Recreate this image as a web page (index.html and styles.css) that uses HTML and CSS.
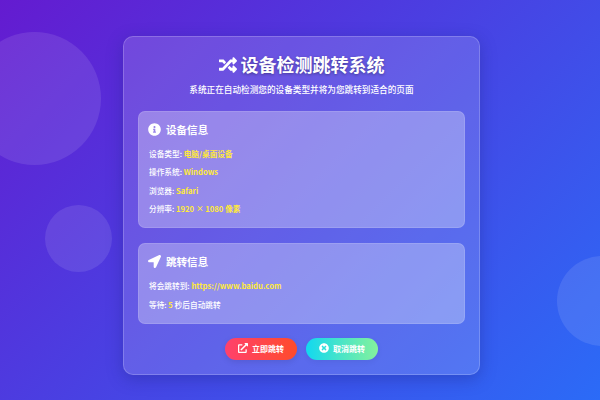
FILE: index.html
```html
<!DOCTYPE html>
<html lang="zh-CN">
<head>
<meta charset="utf-8">
<title>设备检测跳转系统</title>
<link rel="stylesheet" href="styles.css">
</head>
<body>
<div class="bubble bubble-a"></div>
<div class="bubble bubble-b"></div>
<div class="bubble bubble-c"></div>
<main class="card">
  <header class="head">
    <h1 class="title">
      <svg class="title-icon" viewBox="0 0 512 512"><path d="M504.971 359.029c9.373 9.373 9.373 24.569 0 33.941l-80 79.984c-15.01 15.01-40.971 4.49-40.971-16.971V416h-58.785a12.004 12.004 0 0 1-8.773-3.812l-70.556-75.596 53.333-57.143L352 336h32v-39.981c0-21.438 25.943-31.998 40.971-16.971l80 79.981zM12 176h84l52.781 56.551 53.333-57.143-70.556-75.596A11.999 11.999 0 0 0 122.785 96H12c-6.627 0-12 5.373-12 12v56c0 6.627 5.373 12 12 12zm372 0v39.984c0 21.46 25.961 31.98 40.971 16.971l80-79.984c9.373-9.373 9.373-24.569 0-33.941l-80-79.981C409.943 24.021 384 34.582 384 56.019V96h-58.785a12.004 12.004 0 0 0-8.773 3.812L96 336H12c-6.627 0-12 5.373-12 12v56c0 6.627 5.373 12 12 12h110.785c3.326 0 6.503-1.381 8.773-3.812L352 176h32z" fill="currentColor"/></svg>
      <span>设备检测跳转系统</span>
    </h1>
    <p class="subtitle">系统正在自动检测您的设备类型并将为您跳转到适合的页面</p>
  </header>
  <section class="panel">
    <h2 class="panel-title">
      <svg class="panel-icon" viewBox="0 0 512 512"><path d="M256 8C119.043 8 8 119.083 8 256c0 136.997 111.043 248 248 248s248-111.003 248-248C504 119.083 392.957 8 256 8zm0 110c23.196 0 42 18.804 42 42s-18.804 42-42 42-42-18.804-42-42 18.804-42 42-42zm56 254c0 6.627-5.373 12-12 12h-88c-6.627 0-12-5.373-12-12v-24c0-6.627 5.373-12 12-12h12v-64h-12c-6.627 0-12-5.373-12-12v-24c0-6.627 5.373-12 12-12h64c6.627 0 12 5.373 12 12v100h12c6.627 0 12 5.373 12 12v24z" fill="currentColor"/></svg>
      <span>设备信息</span>
    </h2>
    <p class="row">设备类型: <b class="val">电脑/桌面设备</b></p>
    <p class="row">操作系统: <b class="val">Windows</b></p>
    <p class="row">浏览器: <b class="val">Safari</b></p>
    <p class="row">分辨率: <b class="val">1920 × 1080 像素</b></p>
  </section>
  <section class="panel">
    <h2 class="panel-title">
      <svg class="panel-icon" viewBox="0 0 512 512"><path d="M444.52 3.52L28.74 195.42c-47.97 22.39-31.98 92.75 19.19 92.75h175.91v175.91c0 51.17 70.36 67.17 92.75 19.19l191.9-415.78c15.99-38.39-25.59-79.97-63.97-63.97z" fill="currentColor"/></svg>
      <span>跳转信息</span>
    </h2>
    <p class="row">将会跳转到: <b class="val">https://www.baidu.com</b></p>
    <p class="row">等待: <b class="val">5</b> 秒后自动跳转</p>
  </section>
  <div class="actions">
    <a class="btn btn-go">
      <svg class="btn-icon" viewBox="0 0 512 512"><path d="M432 320h-32a16 16 0 0 0-16 16v112H64V128h144a16 16 0 0 0 16-16V80a16 16 0 0 0-16-16H48a48 48 0 0 0-48 48v352a48 48 0 0 0 48 48h352a48 48 0 0 0 48-48V336a16 16 0 0 0-16-16zM488 0H360c-21.37 0-32.05 25.91-17 41l35.73 35.73L135 320.370a24 24 0 0 0 0 34L157.670 377a24 24 0 0 0 34 0l243.610-243.680L471 169c15 15 41 4.500 41-17V24a24 24 0 0 0-24-24z" fill="currentColor"/></svg>
      <span>立即跳转</span>
    </a>
    <a class="btn btn-cancel">
      <svg class="btn-icon" viewBox="0 0 512 512"><path d="M256 8C119 8 8 119 8 256s111 248 248 248 248-111 248-248S393 8 256 8zm121.600 313.100c4.700 4.700 4.700 12.300 0 17L338 377.600c-4.700 4.700-12.300 4.700-17 0L256 312l-65.100 65.600c-4.700 4.700-12.300 4.700-17 0L134.400 338c-4.700-4.700-4.700-12.300 0-17l65.600-65-65.600-65.100c-4.700-4.700-4.700-12.300 0-17l39.600-39.600c4.700-4.700 12.300-4.700 17 0l65 65.700 65.100-65.600c4.700-4.700 12.300-4.700 17 0l39.600 39.600c4.700 4.700 4.700 12.300 0 17L312 256l65.600 65.100z" fill="currentColor"/></svg>
      <span>取消跳转</span>
    </a>
  </div>
</main>
</body>
</html>
```
FILE: styles.css
```css
* { box-sizing: border-box; margin: 0; padding: 0; }
html, body { height: 100%; }
body {
  position: relative;
  overflow: hidden;
  display: flex;
  align-items: center;
  justify-content: center;
  padding: 11px 0 0 3px;
  background: linear-gradient(135deg, #641bd0 0%, #2b6bf7 100%);
  color: #fff;
  font-family: "Noto Sans CJK SC", sans-serif;
}
.bubble {
  position: absolute;
  border-radius: 50%;
  background: rgba(255, 255, 255, 0.1);
}
.bubble-a { width: 133px; height: 133px; left: -32px; top: 32px; }
.bubble-b { width: 67px; height: 67px; left: 45px; top: 205px; }
.bubble-c { width: 90px; height: 90px; left: 557px; top: 256px; }
.card {
  position: relative;
  width: 357px;
  padding: 14px;
  border-radius: 10px;
  background: rgba(255, 255, 255, 0.15);
  border: 1px solid rgba(255, 255, 255, 0.2);
  box-shadow: 0 4px 16px rgba(31, 38, 135, 0.37);
}
.head { text-align: center; margin-bottom: 15px; }
.title {
  display: flex;
  align-items: center;
  justify-content: center;
  gap: 4px;
  font-size: 18px;
  line-height: 27px;
  font-weight: 700;
  text-shadow: 0 1px 3px rgba(0, 0, 0, 0.35);
}
.title-icon { width: 18px; height: 18px; }
.subtitle {
  margin-top: 4px;
  font-size: 8.64px;
  line-height: 14px;
  font-weight: 500;
}
.panel {
  padding: 10px 10px 12px;
  margin-bottom: 15px;
  border-radius: 7px;
  background: rgba(255, 255, 255, 0.3);
  border: 1px solid rgba(255, 255, 255, 0.12);
}
.panel + .panel { margin-bottom: 14px; }
.panel-title {
  display: flex;
  align-items: center;
  gap: 5px;
  font-size: 10.56px;
  line-height: 16px;
  font-weight: 700;
  margin-bottom: 10px;
}
.panel-icon { width: 13px; height: 13px; margin-left: -1px; margin-top: -2px; }
.row { font-size: 7.68px; line-height: 12.3px; font-weight: 500; margin-bottom: 6px; }
.row:last-child { margin-bottom: 0; }
.val { color: #ffe93b; font-weight: 700; }
.actions { display: flex; justify-content: center; gap: 9px; }
.btn {
  display: flex;
  align-items: center;
  justify-content: center;
  gap: 4px;
  width: 72px;
  height: 22px;
  border-radius: 11px;
  font-size: 8px;
  font-weight: 700;
  color: #fff;
}
.btn-icon { width: 10px; height: 10px; margin-top: -2px; }
.btn-go {
  background: linear-gradient(90deg, #ff416c, #ff4b2b);
  box-shadow: 0 2px 6px rgba(0, 0, 0, 0.1);
}
.btn-cancel {
  background: linear-gradient(90deg, #12d8f0, #84f29c);
  box-shadow: 0 2px 6px rgba(0, 0, 0, 0.06);
}
```
